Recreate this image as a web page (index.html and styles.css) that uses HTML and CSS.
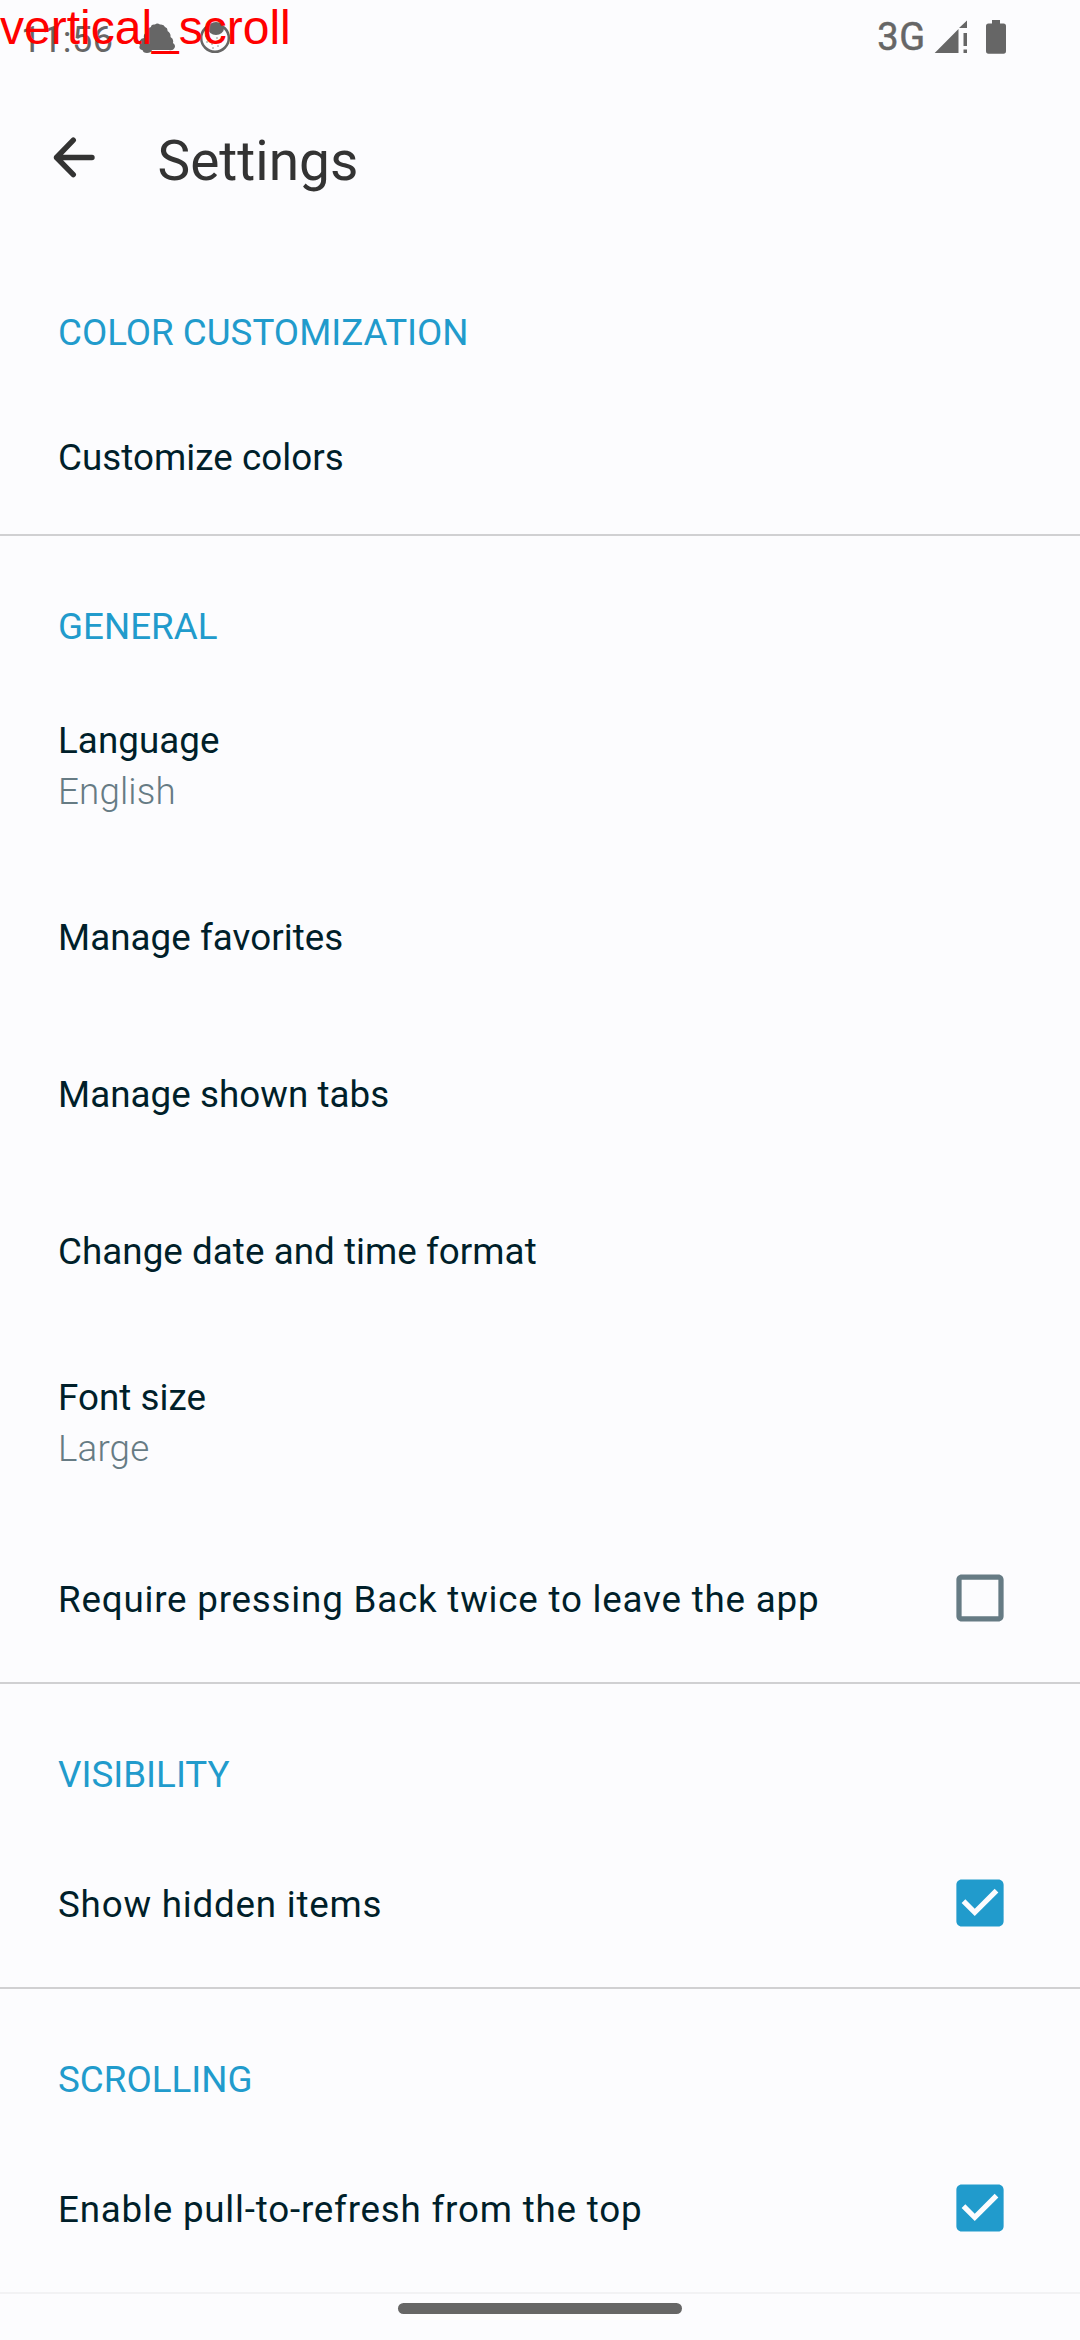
FILE: index.html
```html
<!DOCTYPE html>
<html lang="en">
<head>
<meta charset="utf-8">
<title>Settings</title>
<link rel="stylesheet" href="styles.css">
</head>
<body>
<div class="screen">
  <div class="gesture-label">vertical_scroll</div>

  <div class="status-bar">
    <div class="status-left">
      <span class="clock">11:56</span>
      <svg class="icon-cloud" width="38" height="31" viewBox="0 0 38 31" fill="#666">
        <path d="M13 4Q13 1 17 1.500Q19-.5 22 1.500Q26 1 27 4Q30 5 29.500 8Q33 10 32.500 14Q36 16 35 20Q38 22 36.500 25Q35 28 31 27H14Q13 30 9 30Q5 30 4.500 27Q0 26 2 22Q-.5 20 2 17.500Q3 15 6 15Q5 11 9 9Q9 5 13 4Z"/>
      </svg>
      <svg class="icon-dial" width="32" height="32" viewBox="0 0 32 32" fill="#666">
        <circle cx="16" cy="16" r="13.800" fill="none" stroke="#666" stroke-width="2.500"/>
        <ellipse cx="17" cy="6.500" rx="8" ry="6.500"/>
        <g><circle cx="7" cy="14" r=".7"/><circle cx="11" cy="17" r=".8"/><circle cx="8" cy="20" r=".7"/><circle cx="13" cy="22" r=".7"/><circle cx="18" cy="16" r=".7"/><circle cx="19" cy="24" r=".7"/><circle cx="24" cy="15" r=".8"/><circle cx="22" cy="20" r=".7"/><circle cx="14" cy="26" r=".7"/></g>
      </svg>
    </div>
    <div class="status-right">
      <span class="network">3G</span>
      <svg class="icon-signal" width="34" height="34" viewBox="0 0 34 34" fill="#666">
        <path d="M.7 33L24.500 9V33ZM25 8L33 .5V8ZM29.500 13H33V26H29.500ZM29.500 29.500H33V33H29.500Z"/>
      </svg>
      <svg class="icon-battery" width="20" height="34" viewBox="0 0 20 34" fill="#666">
        <path d="M6 0H14V3.500H17.500Q20 3.500 20 6V31Q20 33.700 17.500 33.700H2.500Q0 33.700 0 31V6Q0 3.500 2.500 3.500H6Z"/>
      </svg>
    </div>
  </div>

  <header class="app-bar">
    <svg class="icon-back" width="44" height="44" viewBox="0 0 44 44" fill="none" stroke="#333" stroke-width="5.400" stroke-linecap="round" stroke-linejoin="round">
      <path d="M21.300 4.200L4.500 21.500L21.300 38.600M4.500 21.500H40"/>
    </svg>
    <h1 class="title">Settings</h1>
  </header>

  <main>
    <section class="group">
      <h2 class="group-title">COLOR CUSTOMIZATION</h2>
      <div class="row">Customize colors</div>
    </section>
    <section class="group">
      <h2 class="group-title">GENERAL</h2>
      <div class="row row-double"><div>Language</div><div class="value">English</div></div>
      <div class="row">Manage favorites</div>
      <div class="row">Manage shown tabs</div>
      <div class="row">Change date and time format</div>
      <div class="row row-double"><div>Font size</div><div class="value">Large</div></div>
      <div class="row row-check">
        <span>Require pressing Back twice to leave the app</span>
        <svg class="checkbox" viewBox="2.857 2.857 18.286 18.286"><path d="M19 5v14H5V5h14m0-2H5c-1.100 0-2 .9-2 2v14c0 1.100.9 2 2 2h14c1.100 0 2-.9 2-2V5c0-1.100-.9-2-2-2z"/></svg>
      </div>
    </section>
    <section class="group">
      <h2 class="group-title">VISIBILITY</h2>
      <div class="row row-check">
        <span>Show hidden items</span>
        <svg class="checkbox checked" viewBox="2.857 2.857 18.286 18.286"><path d="M19 3H5c-1.110 0-2 .9-2 2v14c0 1.100.89 2 2 2h14c1.110 0 2-.9 2-2V5c0-1.100-.89-2-2-2zm-9 14l-5-5 1.410-1.410L10 14.170l7.590-7.590L19 8l-9 9z"/></svg>
      </div>
    </section>
    <section class="group group-last">
      <h2 class="group-title">SCROLLING</h2>
      <div class="row row-check">
        <span>Enable pull-to-refresh from the top</span>
        <svg class="checkbox checked" viewBox="2.857 2.857 18.286 18.286"><path d="M19 3H5c-1.110 0-2 .9-2 2v14c0 1.100.89 2 2 2h14c1.110 0 2-.9 2-2V5c0-1.100-.89-2-2-2zm-9 14l-5-5 1.410-1.410L10 14.170l7.590-7.590L19 8l-9 9z"/></svg>
      </div>
    </section>
  </main>

  <footer class="nav-bar"><div class="nav-handle"></div></footer>
</div>
</body>
</html>
```
FILE: styles.css
```css
* {
  box-sizing: border-box;
}

body {
  margin: 0;
  background: #fcfcfe;
  color: #001f2a;
  font-family: Roboto, sans-serif;
}

.screen {
  position: relative;
  display: flex;
  flex-direction: column;
  width: 1080px;
  height: 2340px;
  overflow: hidden;
}

/* Debug label drawn on top of the status bar */
.gesture-label {
  position: absolute;
  top: 0;
  left: 0;
  z-index: 1;
  font: 48px/55px "Liberation Sans", Arial, sans-serif;
  color: #f00;
}

.status-bar {
  display: flex;
  justify-content: space-between;
  height: 78px;
  padding: 20px 74px 0 21px;
  color: #666;
}

.status-left,
.status-right {
  display: flex;
  align-items: flex-start;
}

.clock {
  width: 117px;
  font-size: 36px;
  line-height: 42px;
  letter-spacing: 0.6px;
  margin-top: -1px;
}

.icon-cloud {
  margin-top: 3px;
}

.icon-dial {
  margin: 2px 0 0 23px;
}

.network {
  font-size: 38px;
  font-weight: 400;
  line-height: 43px;
  letter-spacing: 0.8px;
  -webkit-text-stroke: 0.5px #666;
  margin: -4px 8px 0 0;
}

.icon-battery {
  margin-left: 18px;
}

.app-bar {
  display: flex;
  height: 164px;
  padding: 58px 52px 0;
}

.title {
  margin: -7px 0 0 61.5px;
  font-size: 55px;
  font-weight: 400;
  line-height: 64px;
  color: #333;
}

.group {
  border-bottom: 2px solid #d0d0d2;
}

.group-last {
  border-color: #f2f2f4;
}

.group-title {
  height: 137px;
  margin: 0;
  padding: 65px 58px 0;
  font-size: 36.75px;
  font-weight: 400;
  line-height: 51px;
  color: #219bcc;
}

.row {
  height: 157px;
  padding: 53px 58px;
  font-size: 36.75px;
  line-height: 51px;
  letter-spacing: 0.05px;
}

.group > .row:last-child {
  margin-bottom: -2px;
}

.row-double {
  height: 186px;
  padding-top: 42px;
  padding-bottom: 42px;
}

.value {
  font-weight: 300;
  letter-spacing: 0.15px;
  color: #667b84;
}

.row-check {
  display: flex;
  justify-content: space-between;
  height: 168px;
  padding: 58px 76px 0 58px;
  letter-spacing: 0.79px;
}

.checkbox {
  width: 48px;
  height: 48px;
  fill: #667b84;
}

.checked {
  fill: #219bcc;
}

.nav-bar {
  display: flex;
  justify-content: center;
  padding-top: 9px;
}

.nav-handle {
  width: 284px;
  height: 11px;
  border-radius: 5.5px;
  background: #666;
}
```
